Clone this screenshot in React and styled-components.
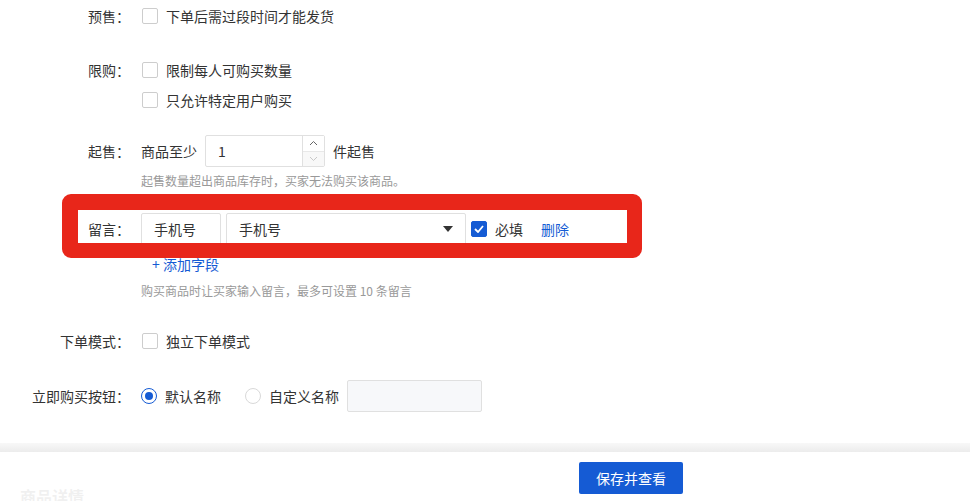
import React from "react";
import styled, { createGlobalStyle } from "styled-components";

const GlobalStyle = createGlobalStyle`
  html, body {
    margin: 0;
    padding: 0;
    background: #fff;
  }
  body {
    font-family: "Noto Sans CJK SC", "Noto Sans", sans-serif;
    font-size: 14px;
    color: #333;
  }
`;

const Page = styled.div`
  width: 970px;
  height: 501px;
  overflow: hidden;
`;

const Form = styled.div`
  display: flex;
  flex-direction: column;
  padding-top: 1px;
`;

const Group = styled.div`
  position: relative;
  display: flex;
  align-items: flex-start;
  margin-top: ${(p) => p.$mt || 0}px;
`;

const Label = styled.div`
  width: 130px;
  flex-shrink: 0;
  text-align: right;
  height: ${(p) => p.$h || 30}px;
  line-height: ${(p) => p.$h || 30}px;
  color: #333;
  margin-right: 11px;
`;

const Controls = styled.div`
  display: flex;
  flex-direction: column;
`;

const Line = styled.div`
  display: flex;
  align-items: center;
  height: ${(p) => p.$h || 30}px;
  margin-top: ${(p) => p.$mt || 0}px;
  margin-left: ${(p) => p.$ml || 0}px;
`;

const Box = styled.span`
  box-sizing: border-box;
  width: 16px;
  height: 16px;
  border-radius: 2px;
  border: 1px solid ${(p) => (p.$checked ? "#155bd4" : "#cdcdcd")};
  background: ${(p) => (p.$checked ? "#155bd4" : "#fff")};
  display: inline-flex;
  align-items: center;
  justify-content: center;
  margin-left: 1px;
  flex-shrink: 0;
`;

const Radio = styled.span`
  box-sizing: border-box;
  width: 16px;
  height: 16px;
  border-radius: 50%;
  border: 1px solid ${(p) => (p.$checked ? "#155bd4" : "#d9d9d9")};
  display: inline-flex;
  align-items: center;
  justify-content: center;
  flex-shrink: 0;
  margin-left: ${(p) => p.$ml || 0}px;
  &::after {
    content: "";
    width: 8px;
    height: 8px;
    border-radius: 50%;
    background: ${(p) => (p.$checked ? "#155bd4" : "transparent")};
  }
`;

const OptText = styled.span`
  margin-left: 8px;
  color: #333;
`;

const Hint = styled.div`
  font-size: 12px;
  color: #999;
  line-height: 18px;
  margin-top: ${(p) => p.$mt || 0}px;
`;

const Plain = styled.span`
  color: #333;
  margin: ${(p) => p.$m || "0"};
`;

const NumberBox = styled.div`
  box-sizing: border-box;
  width: 120px;
  height: 32px;
  border: 1px solid #e0e0e0;
  border-radius: 2px;
  display: flex;
  margin-left: 8px;
`;

const NumberValue = styled.div`
  flex: 1;
  padding-left: 12px;
  line-height: 30px;
  color: #333;
`;

const Stepper = styled.div`
  width: 21px;
  border-left: 1px solid #e0e0e0;
  display: flex;
  flex-direction: column;
`;

const Step = styled.div`
  flex: 1;
  display: flex;
  align-items: center;
  justify-content: center;
  background: ${(p) => (p.$disabled ? "#f8f8f8" : "#fff")};
  border-top: ${(p) => (p.$disabled ? "1px solid #e8e8e8" : "none")};
`;

const TextInput = styled.div`
  box-sizing: border-box;
  width: ${(p) => p.$w}px;
  height: 32px;
  border: 1px solid #e0e0e0;
  border-radius: 2px;
  padding-left: 12px;
  line-height: 30px;
  color: #333;
  background: ${(p) => p.$bg || "#fff"};
  margin-left: ${(p) => p.$ml || 0}px;
`;

const Select = styled(TextInput)`
  display: flex;
  align-items: center;
  justify-content: space-between;
  padding-right: 12px;
`;

const Caret = styled.span`
  width: 0;
  height: 0;
  border-left: 5px solid transparent;
  border-right: 5px solid transparent;
  border-top: 6px solid #333;
`;

const Link = styled.span`
  color: #155bd4;
  margin-left: ${(p) => p.$ml || 0}px;
  cursor: pointer;
`;

const Highlight = styled.div`
  position: absolute;
  left: 62px;
  top: -19px;
  width: 580px;
  height: 64px;
  box-sizing: border-box;
  border: 16px solid #e8261a;
  border-right-width: 15px;
  border-bottom-width: 15px;
  border-radius: 9px;
  pointer-events: none;
`;

const Band = styled.div`
  margin-top: 31px;
  height: 9px;
  background: linear-gradient(#f8f8f8, #ececec);
`;

const Section = styled.div`
  padding: 32px 20px 0;
`;

const SectionTitle = styled.div`
  font-size: 16px;
  font-weight: 700;
  color: #333;
`;

const Footer = styled.div`
  position: fixed;
  left: 0;
  right: 0;
  bottom: 0;
  height: 49px;
  background: rgba(255, 255, 255, 0.93);
  display: flex;
  align-items: center;
  padding-left: 579px;
  box-sizing: border-box;
`;

const PrimaryButton = styled.button`
  width: 104px;
  height: 32px;
  border: none;
  border-radius: 2px;
  background: #155bd4;
  color: #fff;
  font-family: inherit;
  font-size: 14px;
  margin-top: 2px;
`;

function Tick() {
  return (
    <svg width="10" height="8" viewBox="0 0 10 8">
      <path d="M1 4 L4 7 L9 1" fill="none" stroke="#fff" strokeWidth="1.8" />
    </svg>
  );
}

function Check({ checked, children }) {
  return (
    <Line>
      <Box $checked={checked}>{checked && <Tick />}</Box>
      <OptText>{children}</OptText>
    </Line>
  );
}

export default function App() {
  return (
    <Page>
      <GlobalStyle />
      <Form>
        <Group>
          <Label>预售：</Label>
          <Controls>
            <Check>下单后需过段时间才能发货</Check>
          </Controls>
        </Group>

        <Group $mt={24}>
          <Label>限购：</Label>
          <Controls>
            <Check>限制每人可购买数量</Check>
            <Check>只允许特定用户购买</Check>
          </Controls>
        </Group>

        <Group $mt={20}>
          <Label $h={32}>起售：</Label>
          <Controls>
            <Line $h={32}>
              <Plain>商品至少</Plain>
              <NumberBox>
                <NumberValue>1</NumberValue>
                <Stepper>
                  <Step>
                    <svg width="9" height="6" viewBox="0 0 9 6">
                      <path d="M1 5 L4.5 1.5 L8 5" fill="none" stroke="#666" strokeWidth="1" />
                    </svg>
                  </Step>
                  <Step $disabled>
                    <svg width="9" height="6" viewBox="0 0 9 6">
                      <path d="M1 1 L4.5 4.5 L8 1" fill="none" stroke="#c8c8c8" strokeWidth="1" />
                    </svg>
                  </Step>
                </Stepper>
              </NumberBox>
              <Plain $m="0 0 0 8px">件起售</Plain>
            </Line>
            <Hint $mt={5}>起售数量超出商品库存时，买家无法购买该商品。</Hint>
          </Controls>
        </Group>

        <Group $mt={23}>
          <Label $h={32}>留言：</Label>
          <Controls>
            <Line $h={32}>
              <TextInput $w={80}>手机号</TextInput>
              <Select $w={240} $ml={5}>
                手机号
                <Caret />
              </Select>
              <Line $h={32} $ml={4}>
                <Box $checked>
                  <Tick />
                </Box>
                <OptText>必填</OptText>
              </Line>
              <Link $ml={18}>删除</Link>
            </Line>
            <Line $h={20} $mt={9}>
              <Link $ml={11}>+ 添加字段</Link>
            </Line>
            <Hint $mt={8}>购买商品时让买家输入留言，最多可设置 10 条留言</Hint>
          </Controls>
          <Highlight />
        </Group>

        <Group $mt={26}>
          <Label>下单模式：</Label>
          <Controls>
            <Check>独立下单模式</Check>
          </Controls>
        </Group>

        <Group $mt={24}>
          <Label $h={32}>立即购买按钮：</Label>
          <Controls>
            <Line $h={32}>
              <Radio $checked />
              <OptText>默认名称</OptText>
              <Radio $ml={24} />
              <OptText>自定义名称</OptText>
              <TextInput $w={135} $ml={8} $bg="#f7f8fa" />
            </Line>
          </Controls>
        </Group>
      </Form>

      <Band />
      <Section>
        <SectionTitle>商品详情</SectionTitle>
      </Section>

      <Footer>
        <PrimaryButton>保存并查看</PrimaryButton>
      </Footer>
    </Page>
  );
}
